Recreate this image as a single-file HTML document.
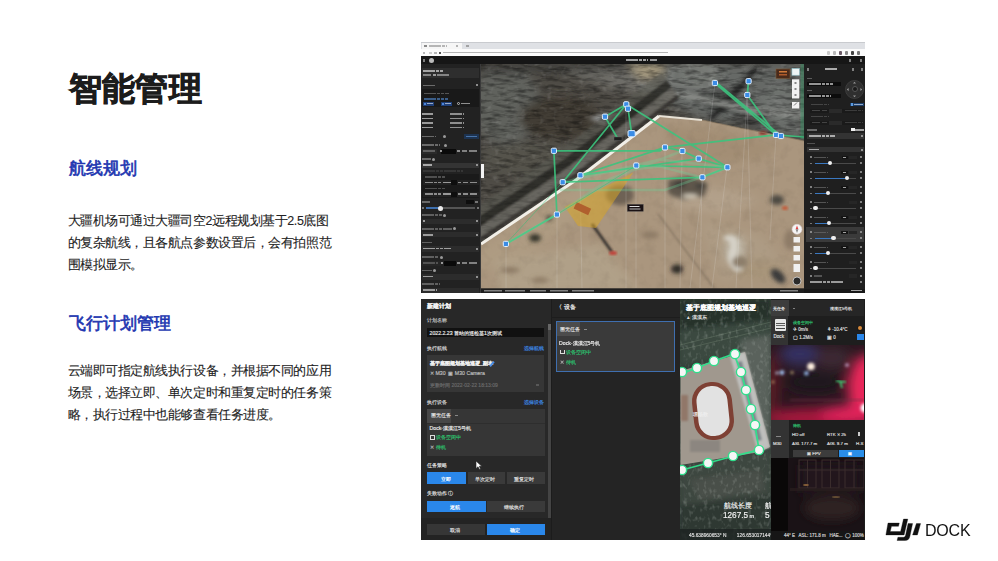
<!DOCTYPE html>
<html><head><meta charset="utf-8">
<style>
*{margin:0;padding:0;box-sizing:border-box}
html,body{width:998px;height:561px;overflow:hidden;background:#fff}
body{position:relative;font-family:"Liberation Sans",sans-serif;color:#222}
.a{position:absolute}
.t{white-space:nowrap}
#title{left:68.8px;top:66.5px;font-size:33px;font-weight:bold;color:#1c1c1c;line-height:44px;-webkit-text-stroke:0.8px #1c1c1c;letter-spacing:0.3px}
.h2{font-size:16.5px;font-weight:normal;color:#2136b0;line-height:22px;-webkit-text-stroke:0.65px #2136b0}
.body{font-size:12.5px;line-height:22px;color:#222;letter-spacing:-0.45px;-webkit-text-stroke:0.1px #222}
#dock{left:925px;top:521.5px;font-size:16px;color:#111;line-height:18px;letter-spacing:-0.2px}
</style></head><body>
<div id="title" class="a t">智能管理</div>
<div class="a t h2" style="left:69px;top:157px">航线规划</div>
<div class="a body t" style="left:67.5px;top:209.5px">大疆机场可通过大疆司空2远程规划基于2.5底图<br>的复杂航线，且各航点参数设置后，会有拍照范<br>围模拟显示。</div>
<div class="a t h2" style="left:69px;top:312px">飞行计划管理</div>
<div class="a body t" style="left:67.5px;top:360px">云端即可指定航线执行设备，并根据不同的应用<br>场景，选择立即、单次定时和重复定时的任务策<br>略，执行过程中也能够查看任务进度。</div>
<div class="a" style="left:0;top:0;width:998px;height:561px;filter:blur(0.3px)">
<div class="a" style="left:421px;top:42px;width:444px;height:7px;background:#dfe1e5;"></div>
<div class="a" style="left:421px;top:42px;width:444px;height:0.8px;background:#c9cbcf;"></div>
<div class="a" style="left:422px;top:43px;width:40px;height:6px;background:#f6f6f6;"></div>
<div class="a" style="left:429px;top:45.05px;width:18px;height:1.5px;background:repeating-linear-gradient(90deg,#9a9a9a 0 3.6px,transparent 3.6px 4.2px);opacity:0.7"></div>
<div class="a" style="left:424px;top:44.8px;width:3px;height:2.2px;background:#8a8a8a;"></div>
<div class="a" style="left:456px;top:45.05px;width:2px;height:1.5px;background:#999;opacity:0.7"></div>
<div class="a" style="left:466px;top:44.8px;width:3px;height:2px;background:#888;opacity:0.7"></div>
<div class="a" style="left:421px;top:49px;width:444px;height:7px;background:#fbfbfb;"></div>
<div class="a" style="left:423px;top:51.5px;width:2px;height:2px;background:#999;opacity:0.7"></div>
<div class="a" style="left:429px;top:51.5px;width:3px;height:2px;background:#bbb;opacity:0.7"></div>
<div class="a" style="left:434px;top:51.5px;width:3px;height:2px;background:#999;opacity:0.7"></div>
<div class="a" style="left:439px;top:51.5px;width:2px;height:2.5px;background:#555;"></div>
<div class="a" style="left:443px;top:51.8px;width:225px;height:1.4px;background:#b4b4b4;"></div>
<div class="a" style="left:827px;top:51px;width:3px;height:3.5px;background:#c8c8c8;border-radius:1px"></div>
<div class="a" style="left:833px;top:51px;width:3px;height:3.5px;background:#b8b8b8;border-radius:1px"></div>
<div class="a" style="left:839px;top:51px;width:3px;height:3.5px;background:#6a5a66;border-radius:1px"></div>
<div class="a" style="left:845px;top:51px;width:3px;height:3.5px;background:#888;border-radius:1px"></div>
<div class="a" style="left:851px;top:51px;width:3px;height:3.5px;background:#444;border-radius:1px"></div>
<div class="a" style="left:857px;top:51px;width:3px;height:3.5px;background:#777;border-radius:1px"></div>
<div class="a" style="left:421px;top:56px;width:444px;height:8px;background:#161616;"></div>
<div class="a" style="left:423px;top:58.5px;width:2px;height:3px;background:#aaa;opacity:0.7"></div>
<div class="a" style="left:429px;top:57.5px;width:5px;height:5px;border-radius:50%;background:#bbb"></div>
<div class="a" style="left:626px;top:58.8px;width:22px;height:2.4px;background:repeating-linear-gradient(90deg,#e0e0e0 0 3.6px,transparent 3.6px 4.2px);opacity:0.7"></div>
<div class="a" style="left:650px;top:58.8px;width:7px;height:2.4px;background:repeating-linear-gradient(90deg,#cfcfcf 0 3.6px,transparent 3.6px 4.2px);opacity:0.7"></div>
<div class="a" style="left:849px;top:58.5px;width:2px;height:3px;background:#aaa;opacity:0.7"></div>
<div class="a" style="left:860px;top:58.5px;width:2px;height:3px;background:#aaa;opacity:0.7"></div>
<div class="a" style="left:421px;top:64px;width:59px;height:229px;background:#222;"></div>
<div class="a" style="left:480px;top:64px;width:1px;height:229px;background:#3a3a3a;"></div>
<div class="a" style="left:421.5px;top:67.7px;width:57.7px;height:10.8px;background:#2e2e2e;"></div>
<div class="a" style="left:423px;top:69.5px;width:20px;height:2px;background:repeating-linear-gradient(90deg,#d8d8d8 0 3.6px,transparent 3.6px 4.2px);opacity:0.7"></div>
<div class="a" style="left:423px;top:74.1px;width:8px;height:1.8px;background:repeating-linear-gradient(90deg,#aaa 0 3.6px,transparent 3.6px 4.2px);opacity:0.7"></div>
<div class="a" style="left:433px;top:74.0px;width:3px;height:2px;background:#ccc;opacity:0.7"></div>
<div class="a" style="left:437px;top:74.1px;width:13px;height:1.8px;background:repeating-linear-gradient(90deg,#aaa 0 3.6px,transparent 3.6px 4.2px);opacity:0.7"></div>
<div class="a" style="left:423px;top:84.5px;width:12px;height:1.8px;background:repeating-linear-gradient(90deg,#8a8a8a 0 3.6px,transparent 3.6px 4.2px);opacity:0.7"></div>
<div class="a" style="left:476px;top:84.4px;width:2px;height:2px;background:#bbb;opacity:0.7"></div>
<div class="a" style="left:421.5px;top:89.3px;width:57.7px;height:17.7px;background:#191919;"></div>
<div class="a" style="left:424px;top:92.7px;width:25px;height:1.6px;background:repeating-linear-gradient(90deg,#6e6e6e 0 3.6px,transparent 3.6px 4.2px);opacity:0.7"></div>
<div class="a" style="left:424px;top:98.0px;width:24px;height:1.6px;background:repeating-linear-gradient(90deg,#4a7bb8 0 3.6px,transparent 3.6px 4.2px);opacity:0.7"></div>
<div class="a" style="left:423px;top:102px;width:11px;height:3.5px;background:#1f3f78;"></div>
<div class="a" style="left:441px;top:102px;width:11px;height:3.5px;background:#1f3f78;"></div>
<div class="a" style="left:424px;top:102.6px;width:2px;height:2.2px;background:#4d86d8;"></div>
<div class="a" style="left:442px;top:102.6px;width:2px;height:2.2px;background:#4d86d8;"></div>
<div class="a" style="left:427px;top:102.95px;width:6px;height:1.5px;background:repeating-linear-gradient(90deg,#cfd8e8 0 3.6px,transparent 3.6px 4.2px);opacity:0.7"></div>
<div class="a" style="left:445px;top:102.95px;width:6px;height:1.5px;background:repeating-linear-gradient(90deg,#cfd8e8 0 3.6px,transparent 3.6px 4.2px);opacity:0.7"></div>
<div class="a" style="left:457px;top:102px;width:3px;height:3px;border:0.6px solid #bbb;border-radius:50%"></div>
<div class="a" style="left:461px;top:102.95px;width:9px;height:1.5px;background:repeating-linear-gradient(90deg,#c0c0c0 0 3.6px,transparent 3.6px 4.2px);opacity:0.7"></div>
<div class="a" style="left:422px;top:113.1px;width:11px;height:1.8px;background:repeating-linear-gradient(90deg,#cfcfcf 0 3.6px,transparent 3.6px 4.2px);opacity:0.7"></div>
<div class="a" style="left:450px;top:113.1px;width:14px;height:1.8px;background:repeating-linear-gradient(90deg,#bdbdbd 0 3.6px,transparent 3.6px 4.2px);opacity:0.7"></div>
<div class="a" style="left:422px;top:117.6px;width:11px;height:1.8px;background:repeating-linear-gradient(90deg,#cfcfcf 0 3.6px,transparent 3.6px 4.2px);opacity:0.7"></div>
<div class="a" style="left:450px;top:117.6px;width:14px;height:1.8px;background:repeating-linear-gradient(90deg,#bdbdbd 0 3.6px,transparent 3.6px 4.2px);opacity:0.7"></div>
<div class="a" style="left:422px;top:122.1px;width:11px;height:1.8px;background:repeating-linear-gradient(90deg,#cfcfcf 0 3.6px,transparent 3.6px 4.2px);opacity:0.7"></div>
<div class="a" style="left:450px;top:122.1px;width:14px;height:1.8px;background:repeating-linear-gradient(90deg,#bdbdbd 0 3.6px,transparent 3.6px 4.2px);opacity:0.7"></div>
<div class="a" style="left:422px;top:126.6px;width:11px;height:1.8px;background:repeating-linear-gradient(90deg,#cfcfcf 0 3.6px,transparent 3.6px 4.2px);opacity:0.7"></div>
<div class="a" style="left:450px;top:126.6px;width:14px;height:1.8px;background:repeating-linear-gradient(90deg,#bdbdbd 0 3.6px,transparent 3.6px 4.2px);opacity:0.7"></div>
<div class="a" style="left:422px;top:135.5px;width:14px;height:1.8px;background:repeating-linear-gradient(90deg,#8a8a8a 0 3.6px,transparent 3.6px 4.2px);opacity:0.7"></div>
<div class="a" style="left:443px;top:135px;width:3px;height:3px;border-radius:50%;background:#999"></div>
<div class="a" style="left:464px;top:133.5px;width:15px;height:5.5px;background:#1d3350;"></div>
<div class="a" style="left:466px;top:135.55px;width:11px;height:1.5px;background:repeating-linear-gradient(90deg,#5b8fd0 0 3.6px,transparent 3.6px 4.2px);opacity:0.7"></div>
<div class="a" style="left:422px;top:144.1px;width:18px;height:1.8px;background:repeating-linear-gradient(90deg,#8a8a8a 0 3.6px,transparent 3.6px 4.2px);opacity:0.7"></div>
<div class="a" style="left:444px;top:143.5px;width:3px;height:3px;border-radius:50%;background:#999"></div>
<div class="a" style="left:421.5px;top:148.5px;width:15.5px;height:5.0px;background:#2a2a2a;"></div>
<div class="a" style="left:423px;top:150.25px;width:12px;height:1.5px;background:repeating-linear-gradient(90deg,#777 0 3.6px,transparent 3.6px 4.2px);opacity:0.7"></div>
<div class="a" style="left:441px;top:148.5px;width:15px;height:5.0px;background:#0a0a0a;"></div>
<div class="a" style="left:440px;top:150.1px;width:2px;height:1.8px;background:#ccc;opacity:0.7"></div>
<div class="a" style="left:457px;top:150.2px;width:3px;height:1.6px;background:#bbb;opacity:0.7"></div>
<div class="a" style="left:462px;top:150.2px;width:5px;height:1.6px;background:#aaa;opacity:0.7"></div>
<div class="a" style="left:469px;top:150.2px;width:8px;height:1.6px;background:repeating-linear-gradient(90deg,#aaa 0 3.6px,transparent 3.6px 4.2px);opacity:0.7"></div>
<div class="a" style="left:422px;top:158.1px;width:9px;height:1.8px;background:repeating-linear-gradient(90deg,#8a8a8a 0 3.6px,transparent 3.6px 4.2px);opacity:0.7"></div>
<div class="a" style="left:432px;top:157.5px;width:3px;height:3px;border-radius:50%;background:#999"></div>
<div class="a" style="left:421.5px;top:162.5px;width:57.7px;height:5.5px;background:#343434;"></div>
<div class="a" style="left:423px;top:164.3px;width:9px;height:1.8px;background:repeating-linear-gradient(90deg,#dcdcdc 0 3.6px,transparent 3.6px 4.2px);opacity:0.7"></div>
<div class="a" style="left:476px;top:164.2px;width:2px;height:2px;background:#bbb;opacity:0.7"></div>
<div class="a" style="left:423px;top:170.25px;width:40px;height:1.5px;background:repeating-linear-gradient(90deg,#3e3e3e 0 3.6px,transparent 3.6px 4.2px);opacity:0.7"></div>
<div class="a" style="left:421.5px;top:173.5px;width:57.7px;height:24.5px;background:#1a1a1a;"></div>
<div class="a" style="left:425px;top:176.25px;width:20px;height:1.5px;background:repeating-linear-gradient(90deg,#666 0 3.6px,transparent 3.6px 4.2px);opacity:0.7"></div>
<div class="a" style="left:423px;top:180px;width:56px;height:5px;background:#222;"></div>
<div class="a" style="left:425px;top:181.75px;width:8px;height:1.5px;background:repeating-linear-gradient(90deg,#bbb 0 3.6px,transparent 3.6px 4.2px);opacity:0.7"></div>
<div class="a" style="left:434px;top:181.75px;width:3px;height:1.5px;background:#bbb;opacity:0.7"></div>
<div class="a" style="left:438px;top:181.75px;width:3px;height:1.5px;background:#bbb;opacity:0.7"></div>
<div class="a" style="left:443px;top:181.75px;width:8px;height:1.5px;background:repeating-linear-gradient(90deg,#ccc 0 3.6px,transparent 3.6px 4.2px);opacity:0.7"></div>
<div class="a" style="left:451px;top:180px;width:6px;height:5px;background:#0e0e0e;"></div>
<div class="a" style="left:458px;top:181.75px;width:3px;height:1.5px;background:#bbb;opacity:0.7"></div>
<div class="a" style="left:463px;top:181.75px;width:5px;height:1.5px;background:#bbb;opacity:0.7"></div>
<div class="a" style="left:470px;top:181.75px;width:7px;height:1.5px;background:repeating-linear-gradient(90deg,#bbb 0 3.6px,transparent 3.6px 4.2px);opacity:0.7"></div>
<div class="a" style="left:425px;top:187.75px;width:20px;height:1.5px;background:repeating-linear-gradient(90deg,#666 0 3.6px,transparent 3.6px 4.2px);opacity:0.7"></div>
<div class="a" style="left:423px;top:191.5px;width:56px;height:5.0px;background:#222;"></div>
<div class="a" style="left:425px;top:193.25px;width:8px;height:1.5px;background:repeating-linear-gradient(90deg,#bbb 0 3.6px,transparent 3.6px 4.2px);opacity:0.7"></div>
<div class="a" style="left:434px;top:193.25px;width:3px;height:1.5px;background:#bbb;opacity:0.7"></div>
<div class="a" style="left:438px;top:193.25px;width:3px;height:1.5px;background:#bbb;opacity:0.7"></div>
<div class="a" style="left:443px;top:193.25px;width:8px;height:1.5px;background:repeating-linear-gradient(90deg,#ccc 0 3.6px,transparent 3.6px 4.2px);opacity:0.7"></div>
<div class="a" style="left:451px;top:191.5px;width:6px;height:5.0px;background:#0e0e0e;"></div>
<div class="a" style="left:458px;top:193.25px;width:3px;height:1.5px;background:#bbb;opacity:0.7"></div>
<div class="a" style="left:463px;top:193.25px;width:5px;height:1.5px;background:#bbb;opacity:0.7"></div>
<div class="a" style="left:470px;top:193.25px;width:7px;height:1.5px;background:repeating-linear-gradient(90deg,#bbb 0 3.6px,transparent 3.6px 4.2px);opacity:0.7"></div>
<div class="a" style="left:422px;top:201.0px;width:8px;height:1.6px;background:repeating-linear-gradient(90deg,#888 0 3.6px,transparent 3.6px 4.2px);opacity:0.7"></div>
<div class="a" style="left:466px;top:200px;width:8px;height:3.5px;background:#0e0e0e;"></div>
<div class="a" style="left:474.5px;top:201.05px;width:3px;height:1.5px;background:#999;opacity:0.7"></div>
<div class="a" style="left:422px;top:207.25px;width:2px;height:1.5px;background:#999;opacity:0.7"></div>
<div class="a" style="left:426px;top:207.3px;width:14px;height:1.4px;background:#3e6fae;"></div>
<div class="a" style="left:440px;top:207.4px;width:35px;height:1.2px;background:#555;"></div>
<div class="a" style="left:437.5px;top:205.5px;width:5px;height:5px;border-radius:50%;background:#eaeaea"></div>
<div class="a" style="left:477px;top:207.25px;width:2px;height:1.5px;background:#999;opacity:0.7"></div>
<div class="a" style="left:422px;top:214.2px;width:20px;height:1.6px;background:repeating-linear-gradient(90deg,#7a7a7a 0 3.6px,transparent 3.6px 4.2px);opacity:0.7"></div>
<div class="a" style="left:443px;top:213.5px;width:3px;height:3px;border-radius:50%;background:#999"></div>
<div class="a" style="left:421.5px;top:218.5px;width:57.7px;height:5.0px;background:#2c2c2c;"></div>
<div class="a" style="left:423px;top:220.2px;width:2px;height:1.6px;background:#ccc;opacity:0.7"></div>
<div class="a" style="left:476px;top:220.0px;width:2px;height:2px;background:#bbb;opacity:0.7"></div>
<div class="a" style="left:422px;top:228.0px;width:30px;height:1.6px;background:repeating-linear-gradient(90deg,#7a7a7a 0 3.6px,transparent 3.6px 4.2px);opacity:0.7"></div>
<div class="a" style="left:453px;top:227.3px;width:3px;height:3px;border-radius:50%;background:#999"></div>
<div class="a" style="left:421.5px;top:232.3px;width:57.7px;height:5.2px;background:#2c2c2c;"></div>
<div class="a" style="left:423px;top:234.2px;width:10px;height:1.6px;background:repeating-linear-gradient(90deg,#ccc 0 3.6px,transparent 3.6px 4.2px);opacity:0.7"></div>
<div class="a" style="left:476px;top:234.0px;width:2px;height:2px;background:#bbb;opacity:0.7"></div>
<div class="a" style="left:422px;top:241.5px;width:10px;height:1.6px;background:repeating-linear-gradient(90deg,#7a7a7a 0 3.6px,transparent 3.6px 4.2px);opacity:0.7"></div>
<div class="a" style="left:421.5px;top:246px;width:57.7px;height:5.5px;background:#2c2c2c;"></div>
<div class="a" style="left:423px;top:247.9px;width:28px;height:1.6px;background:repeating-linear-gradient(90deg,#d0d0d0 0 3.6px,transparent 3.6px 4.2px);opacity:0.7"></div>
<div class="a" style="left:476px;top:247.7px;width:2px;height:2px;background:#bbb;opacity:0.7"></div>
<div class="a" style="left:422px;top:256.2px;width:17px;height:1.6px;background:repeating-linear-gradient(90deg,#7a7a7a 0 3.6px,transparent 3.6px 4.2px);opacity:0.7"></div>
<div class="a" style="left:440px;top:255.5px;width:3px;height:3px;border-radius:50%;background:#999"></div>
<div class="a" style="left:421.5px;top:260.5px;width:19.5px;height:5.0px;background:#262626;"></div>
<div class="a" style="left:423px;top:262.25px;width:15px;height:1.5px;background:repeating-linear-gradient(90deg,#666 0 3.6px,transparent 3.6px 4.2px);opacity:0.7"></div>
<div class="a" style="left:441px;top:262.2px;width:2px;height:1.6px;background:#ccc;opacity:0.7"></div>
<div class="a" style="left:444px;top:260.5px;width:12px;height:5.0px;background:#0a0a0a;"></div>
<div class="a" style="left:457px;top:262.25px;width:3px;height:1.5px;background:#bbb;opacity:0.7"></div>
<div class="a" style="left:462px;top:262.25px;width:5px;height:1.5px;background:#aaa;opacity:0.7"></div>
<div class="a" style="left:469px;top:262.25px;width:8px;height:1.5px;background:repeating-linear-gradient(90deg,#aaa 0 3.6px,transparent 3.6px 4.2px);opacity:0.7"></div>
<div class="a" style="left:422px;top:269.8px;width:10px;height:1.6px;background:repeating-linear-gradient(90deg,#7a7a7a 0 3.6px,transparent 3.6px 4.2px);opacity:0.7"></div>
<div class="a" style="left:433px;top:269px;width:3px;height:3px;border-radius:50%;background:#999"></div>
<div class="a" style="left:421.5px;top:274px;width:57.7px;height:5.5px;background:#2c2c2c;"></div>
<div class="a" style="left:423px;top:275.9px;width:10px;height:1.6px;background:repeating-linear-gradient(90deg,#ccc 0 3.6px,transparent 3.6px 4.2px);opacity:0.7"></div>
<div class="a" style="left:476px;top:275.7px;width:2px;height:2px;background:#bbb;opacity:0.7"></div>
<div class="a" style="left:422px;top:283.2px;width:18px;height:1.6px;background:repeating-linear-gradient(90deg,#7a7a7a 0 3.6px,transparent 3.6px 4.2px);opacity:0.7"></div>
<div class="a" style="left:421.5px;top:287.5px;width:57.7px;height:5.5px;background:#2c2c2c;"></div>
<div class="a" style="left:423px;top:289.2px;width:14px;height:1.6px;background:repeating-linear-gradient(90deg,#ccc 0 3.6px,transparent 3.6px 4.2px);opacity:0.7"></div>
<svg class="a" style="left:481px;top:64px" width="323" height="229" viewBox="481 64 323 229">
<defs>
<filter id="bl"><feGaussianBlur stdDeviation="4"/></filter>
<filter id="bl2"><feGaussianBlur stdDeviation="2"/></filter>
<filter id="bl1"><feGaussianBlur stdDeviation="0.9"/></filter>
<filter id="tx" x="0" y="0" width="100%" height="100%"><feTurbulence type="fractalNoise" baseFrequency="0.07 0.28" numOctaves="3" seed="3"/><feColorMatrix values="0 0 0 0 0  0 0 0 0 0  0 0 0 0 0  0 0 0 -2.2 1.25"/></filter>
<filter id="tx2" x="0" y="0" width="100%" height="100%"><feTurbulence type="fractalNoise" baseFrequency="0.15 0.15" numOctaves="2" seed="7"/><feColorMatrix values="0 0 0 0 1  0 0 0 0 1  0 0 0 0 1  0 0 0 2.5 -1.45"/></filter>
<filter id="tx3" x="0" y="0" width="100%" height="100%"><feTurbulence type="fractalNoise" baseFrequency="0.09" numOctaves="3" seed="11"/><feColorMatrix values="0 0 0 0 0.2  0 0 0 0 0.15  0 0 0 0 0.1  0 0 0 -2.5 1.3"/></filter>
<clipPath id="rockc"><path d="M481 64 L804 64 L804 141 L776 135 L740 128 L702 120 L659 116 L576 180 L481 244Z"/></clipPath>
<clipPath id="sandc"><path d="M481 244 L576 180 L659 116 L702 120 L740 128 L776 135 L804 141 L804 293 L481 293Z"/></clipPath>
</defs>
<rect x="481" y="64" width="323" height="229" fill="#4f4c46"/>
<g filter="url(#bl)">
<ellipse cx="505" cy="105" rx="35" ry="40" fill="#60625d"/>
<ellipse cx="560" cy="118" rx="40" ry="22" fill="#433d36"/>
<ellipse cx="530" cy="160" rx="50" ry="18" fill="#55524c"/>
<path d="M481 64 L700 64 L690 80 L600 78 L540 72 L481 74Z" fill="#3e3d3a"/>
<path d="M560 72 L660 70 L680 95 L620 92Z" fill="#6e6d68"/>
<path d="M628 64 L662 64 L664 74 L642 80Z" fill="#a89c80"/>
<path d="M665 64 L804 64 L804 140 L700 118 L660 100Z" fill="#666966"/>
<ellipse cx="720" cy="100" rx="18" ry="10" fill="#3d3f3c"/>
<ellipse cx="700" cy="75" rx="25" ry="8" fill="#777a76"/>
<ellipse cx="780" cy="105" rx="20" ry="18" fill="#707370"/>
<ellipse cx="750" cy="120" rx="20" ry="8" fill="#484a47"/>
</g>
<g filter="url(#bl2)">
<path d="M588 118 L612 112 L605 124 Z" fill="#9a9c9c"/>
<path d="M708 118 Q730 95 755 66 L760 68 Q736 98 712 121Z" fill="#2a2c2a"/>
<path d="M640 84 Q690 92 752 108 L804 112 L804 117 L752 114 Q690 98 640 91Z" fill="#8a8c88"/>
<rect x="672" y="66" width="40" height="20" fill="none" stroke="#8e918c" stroke-width="2" transform="rotate(8 692 76)"/>
</g>
<path d="M481 244 L576 180 L659 116 L702 120 L740 128 L776 135 L804 141 L804 293 L481 293Z" fill="#aa967e"/>
<g filter="url(#bl)">
<path d="M481 250 L576 186 L640 140 L600 200 L520 260 L481 270Z" fill="#ae9b82"/>
<path d="M665 125 L720 130 L780 145 L760 160 L700 165 L670 150Z" fill="#a38e74"/>
<path d="M660 180 L730 190 L760 200 L720 215 L670 205Z" fill="#b2a08a"/>
<path d="M700 220 L760 235 L790 270 L720 282Z" fill="#ad9b84"/>
<path d="M495 260 L600 245 L640 290 L500 293Z" fill="#b0a088"/>
<ellipse cx="735" cy="250" rx="10" ry="14" fill="#beb6a6"/>
<ellipse cx="760" cy="270" rx="25" ry="10" fill="#a8957a"/>
</g>
<g clip-path="url(#rockc)"><rect x="481" y="64" width="323" height="229" filter="url(#tx)" opacity="0.3"/><rect x="481" y="64" width="323" height="229" filter="url(#tx2)" opacity="0.15"/></g>
<g clip-path="url(#sandc)"><rect x="481" y="64" width="323" height="229" filter="url(#tx3)" opacity="0.18"/></g>
<g filter="url(#bl1)" clip-path="url(#rockc)">
<polygon points="458.9,256.3 574.9,178.3 657.9,114.3 678.9,98.3 676.6,95.0 655.6,111.0 572.6,175.0 456.6,253.0" fill="#3a3834" opacity="1"/>
<polygon points="456.6,253.0 572.6,175.0 655.6,111.0 676.6,95.0 671.6,87.5 650.6,103.5 567.6,167.6 451.6,245.6" fill="#6a6862" opacity="0.9"/>
<polygon points="451.6,245.6 567.6,167.6 650.6,103.5 671.6,87.5 666.6,80.1 645.6,96.1 562.6,160.1 446.6,238.1" fill="#2e2c28" opacity="0.9"/>
<polygon points="446.6,238.1 562.6,160.1 645.6,96.1 666.6,80.1 661.5,72.6 640.5,88.6 557.5,152.6 441.5,230.6" fill="#5a5852" opacity="0.7"/>
</g>
<g clip-path="url(#rockc)"><rect x="481" y="64" width="323" height="229" filter="url(#tx)" opacity="0.2"/></g>
<g filter="url(#bl2)">
<ellipse cx="535" cy="238" rx="6" ry="4" fill="#35352c"/>
<ellipse cx="549" cy="218" rx="3" ry="2.5" fill="#3c3c30"/>
<ellipse cx="677" cy="269" rx="6" ry="4.5" fill="#2f2c28"/>
<path d="M668 180 L690 176 L708 184 L704 196 L684 200 L668 194Z" fill="#5e574c"/>
<ellipse cx="680" cy="184" rx="6" ry="3" fill="#3a3834"/>
<ellipse cx="700" cy="186" rx="5" ry="3" fill="#45423c"/>
<ellipse cx="690" cy="196" rx="8" ry="2" fill="#d4ccbc"/>
<ellipse cx="778" cy="276" rx="5" ry="9" transform="rotate(-45 778 276)" fill="#3a3a3a"/>
<ellipse cx="777" cy="200" rx="7" ry="5" fill="#4e4a42"/>
<path d="M724 236 Q740 232 738 248 Q734 262 744 270 L736 272 Q724 262 730 248 Q732 240 724 240Z" fill="#d6d2c8"/>
<ellipse cx="740" cy="262" rx="8" ry="6" fill="#8c7e6a"/>
<ellipse cx="620" cy="195" rx="14" ry="10" fill="#6e6254"/>
<ellipse cx="510" cy="270" rx="10" ry="3" fill="#8e7c66"/>
<ellipse cx="540" cy="280" rx="8" ry="3" fill="#907e68"/>
<ellipse cx="650" cy="235" rx="9" ry="4" fill="#8f7d67"/>
<ellipse cx="790" cy="240" rx="6" ry="10" fill="#8e7c68"/>
</g>
<path d="M592 224 L612 252" stroke="#3a3530" stroke-width="3" filter="url(#bl1)"/>
<path d="M658 214 L714 288" stroke="#7d6d5c" stroke-width="1.2" filter="url(#bl1)"/>
<ellipse cx="613" cy="253" rx="4" ry="2" fill="#c0443a" filter="url(#bl1)"/>
<ellipse cx="785" cy="208" rx="3" ry="2" fill="#c06040" filter="url(#bl1)"/>
<ellipse cx="763" cy="133" rx="4" ry="2" fill="#8a3a30" filter="url(#bl1)"/>
<path d="M481 244 L576 180 L659 116" stroke="#f2efe8" stroke-width="3" fill="none"/>
<path d="M659 116 L702 120" stroke="#e8e2d6" stroke-width="2" fill="none"/>
<path d="M702 120 L740 128 L776 135 L804 141" stroke="#8f7c64" stroke-width="1.2" fill="none" opacity="0.7"/>
<g stroke="#e8e8e8" stroke-width="0.5" opacity="0.35">
<line x1="557" y1="215" x2="557" y2="288"/><line x1="626" y1="104" x2="626" y2="288"/><line x1="665" y1="147" x2="665" y2="288"/>
<line x1="702" y1="177" x2="700" y2="288"/><line x1="727" y1="167" x2="712" y2="288"/><line x1="748" y1="81" x2="736" y2="288"/>
<line x1="776" y1="135" x2="770" y2="240"/><line x1="636" y1="166" x2="636" y2="288"/><line x1="580" y1="175" x2="582" y2="288"/>
<line x1="506" y1="246" x2="506" y2="288"/><line x1="747" y1="95" x2="752" y2="288"/><line x1="715" y1="83" x2="690" y2="288"/>
<line x1="682" y1="151" x2="680" y2="288"/>
</g>
<path d="M633.3 172.4 L564.7 206.7 L578 226 L596 228Z" fill="#dba624" opacity="0.52"/>
<rect x="574.4" y="205.1" width="16" height="7" fill="#b0602e" transform="rotate(25 582.4 208.6)"/>
<g stroke="#3cc47e" stroke-width="1.7" fill="none" opacity="0.9">
<polyline points="553.9,150.8 660,150.8 665,147.4 776,134.9"/>
<polyline points="553.9,150.8 556.9,214.5 505.9,243.9"/>
<polyline points="562.7,182.2 626.3,104.3 605,116.7 618,139"/>
<polyline points="628,108.7 631.6,133.7"/>
<polyline points="626.3,104.3 727.4,167.3"/>
<polyline points="776,134.9 804,137"/>
<polyline points="714.9,83 776,134.9"/><polyline points="718,84 781,136"/>
<polyline points="747.3,95 776,134.9"/><polyline points="748.6,81.2 747.3,95"/>
<polyline points="665,147.4 682.4,151 698.7,158.6 727.4,167.3 702.4,177.3"/>
<polyline points="580.4,175.3 698.7,158.6"/>
<polyline points="562.7,182.2 702.4,177.3"/>
<polyline points="636.3,165.5 727.4,167.3"/>
<polyline points="580.4,175.3 665,147.4"/>
</g>
<g opacity="0.3" stroke="#6ad89c" stroke-width="2.6" fill="none">
<polyline points="562.7,182.2 660,159.6 727,167"/>
<polyline points="580.4,175.3 660,166.5 700,177"/>
<polyline points="556.9,214.5 610,179 682,151"/>
<polyline points="505.9,243.9 556.9,214.5 636,165.5"/>
<polyline points="560,190 665,190 727,168"/>
</g>
<g opacity="0.5" stroke="#32c078" stroke-width="1" fill="none">
<polyline points="505.9,243.9 562.7,182.2"/>
<polyline points="556.9,214.5 636.3,165.5"/>
</g>
<g fill="#3a8ce6" stroke="#e4f1ff" stroke-width="1">
<rect x="503.3" y="241.3" width="5.2" height="5.2" rx="1.2"/><rect x="554.3" y="211.9" width="5.2" height="5.2" rx="1.2"/><rect x="551.3" y="148.2" width="5.2" height="5.2" rx="1.2"/>
<rect x="623.7" y="101.7" width="5.2" height="5.2" rx="1.2"/><rect x="625.4" y="106.1" width="5.2" height="5.2" rx="1.2"/><rect x="602.4" y="114.1" width="5.2" height="5.2" rx="1.2"/>
<rect x="628.0" y="130.6" width="7.2" height="6.2" rx="1.2"/><rect x="577.8" y="172.7" width="5.2" height="5.2" rx="1.2"/><rect x="560.1" y="179.6" width="5.2" height="5.2" rx="1.2"/>
<rect x="633.7" y="162.9" width="5.2" height="5.2" rx="1.2"/><rect x="712.3" y="80.4" width="5.2" height="5.2" rx="1.2"/><rect x="746.0" y="78.6" width="5.2" height="5.2" rx="1.2"/>
<rect x="744.7" y="92.4" width="5.2" height="5.2" rx="1.2"/><rect x="773.4" y="132.3" width="5.2" height="5.2" rx="1.2"/><rect x="778.4" y="133.4" width="5.2" height="5.2" rx="1.2"/>
<rect x="662.4" y="144.8" width="5.2" height="5.2" rx="1.2"/><rect x="679.8" y="148.4" width="5.2" height="5.2" rx="1.2"/><rect x="696.1" y="156.0" width="5.2" height="5.2" rx="1.2"/>
<rect x="724.8" y="164.7" width="5.2" height="5.2" rx="1.2"/><rect x="699.8" y="174.7" width="5.2" height="5.2" rx="1.2"/>
</g>
<rect x="614" y="137" width="8" height="3.5" fill="#1e1e1e" stroke="#666" stroke-width="0.4"/>
<rect x="627.3" y="204.3" width="16" height="7" fill="#1a1214" stroke="#555" stroke-width="0.4"/><rect x="629.5" y="206" width="10" height="1" fill="#ddd"/><rect x="629.5" y="208.5" width="11" height="1" fill="#bbb"/>
<rect x="776" y="69" width="14" height="9.5" fill="#4a2a1a" stroke="#7a5a3a" stroke-width="0.6"/><rect x="779" y="71" width="8" height="1.5" fill="#d07a3a"/><rect x="779" y="74" width="8" height="1.5" fill="#b05a2a"/>
<rect x="792" y="68.6" width="7.3" height="6.6" fill="#eef4f4" stroke="#9ccfd8" stroke-width="0.6"/>
<rect x="792" y="79.3" width="7.3" height="19.2" fill="#f2f2f2"/>
<rect x="792" y="102" width="7.3" height="6.5" fill="#f2f2f2"/>
<path d="M794 105.5 L797 102.5" stroke="#555" stroke-width="0.8"/>
<rect x="794.5" y="82" width="2" height="2" fill="#888"/><rect x="794.5" y="88" width="2" height="2" fill="#888"/><rect x="794.5" y="94" width="2" height="2" fill="#888"/>
<rect x="800.5" y="64" width="3.5" height="75" fill="#3a9a6a" opacity="0.45"/>
<circle cx="797" cy="229.3" r="5" fill="#f5f5f5" stroke="#d8c8c8" stroke-width="0.6"/>
<path d="M797 225.5 L795.6 229.3 L798.4 229.3Z" fill="#d44"/><path d="M797 233 L795.6 229.3 L798.4 229.3Z" fill="#888"/>
<rect x="793.5" y="237" width="6.5" height="5.5" fill="#f0f0f0"/>
<rect x="793.5" y="246" width="6.5" height="5.5" fill="#f0f0f0"/>
<rect x="793.5" y="255" width="6.5" height="5.5" fill="#f0f0f0"/>
<rect x="793.5" y="264" width="6.5" height="8" fill="#f0f0f0"/>
<circle cx="797" cy="281" r="4" fill="#2a2a2a" stroke="#ddd" stroke-width="0.8"/>
<rect x="481" y="164" width="3" height="14" fill="#f4f4f4"/>
<rect x="481" y="288.3" width="323" height="4.7" fill="#1e1e1e"/>
<rect x="484" y="290.2" width="18" height="1.2" fill="#999"/><rect x="505" y="290.2" width="20" height="1.2" fill="#999"/><rect x="530" y="290.2" width="16" height="1.2" fill="#999"/><rect x="550" y="290.2" width="18" height="1.2" fill="#999"/><rect x="572" y="290.2" width="22" height="1.2" fill="#999"/>
<rect x="780" y="290.2" width="18" height="1.2" fill="#999"/>
</svg>
<div class="a" style="left:804px;top:64px;width:61px;height:229px;background:#1f1f1f;"></div>
<div class="a" style="left:807px;top:68.05px;width:2px;height:2.5px;background:#aaa;opacity:0.7"></div>
<div class="a" style="left:825px;top:68.2px;width:12px;height:2.2px;background:repeating-linear-gradient(90deg,#e8e8e8 0 3.6px,transparent 3.6px 4.2px);opacity:0.7"></div>
<div class="a" style="left:852px;top:68.05px;width:2px;height:2.5px;background:#aaa;opacity:0.7"></div>
<div class="a" style="left:861px;top:68.05px;width:2px;height:2.5px;background:#aaa;opacity:0.7"></div>
<div class="a" style="left:807px;top:77.7px;width:5px;height:1.6px;background:#777;opacity:0.7"></div>
<div class="a" style="left:807px;top:82px;width:33.6px;height:4.4px;background:#0c0c0c;"></div>
<div class="a" style="left:808.5px;top:83.45px;width:24px;height:1.5px;background:repeating-linear-gradient(90deg,#d0d0d0 0 3.6px,transparent 3.6px 4.2px);opacity:0.7"></div>
<div class="a" style="left:807px;top:89.7px;width:5px;height:1.6px;background:#777;opacity:0.7"></div>
<div class="a" style="left:807px;top:94px;width:33.6px;height:4.2px;background:#0c0c0c;"></div>
<div class="a" style="left:808.5px;top:95.35px;width:22px;height:1.5px;background:repeating-linear-gradient(90deg,#d0d0d0 0 3.6px,transparent 3.6px 4.2px);opacity:0.7"></div>
<div class="a" style="left:845px;top:80px;width:19px;height:19px;border-radius:50%;background:#2f2f2f;border:1px solid #3c3c3c"></div>
<div class="a" style="left:851.5px;top:86px;width:6px;height:6px;border-radius:50%;background:#1a1a1a;border:0.8px solid #555"></div>
<svg class="a" style="left:845px;top:80px" width="19" height="19" viewBox="0 0 19 19"><g fill="#9a9a9a"><path d="M9.5 1.8 L8 3.6 L11 3.6Z"/><path d="M9.5 17.2 L8 15.4 L11 15.4Z"/><path d="M1.8 9.5 L3.6 8 L3.6 11Z"/><path d="M17.2 9.5 L15.4 8 L15.4 11Z"/></g></svg>
<div class="a" style="left:850px;top:102.8px;width:14px;height:3.6px;background:#1d3f6c;"></div>
<div class="a" style="left:851px;top:103.4px;width:2px;height:2.4px;background:#5a9ae0;"></div>
<div class="a" style="left:854px;top:103.9px;width:9px;height:1.4px;background:repeating-linear-gradient(90deg,#c8d8ee 0 3.6px,transparent 3.6px 4.2px);opacity:0.7"></div>
<div class="a" style="left:811px;top:103.85px;width:18px;height:1.5px;background:repeating-linear-gradient(90deg,#555 0 3.6px,transparent 3.6px 4.2px);opacity:0.7"></div>
<div class="a" style="left:810px;top:108.5px;width:54px;height:4.5px;background:#1a1a1a;"></div>
<div class="a" style="left:812px;top:110.0px;width:8px;height:1.4px;background:repeating-linear-gradient(90deg,#555 0 3.6px,transparent 3.6px 4.2px);opacity:0.7"></div>
<div class="a" style="left:822px;top:110.0px;width:5px;height:1.4px;background:#555;opacity:0.7"></div>
<div class="a" style="left:829px;top:108.7px;width:13px;height:4.0px;background:#2a2a2a;"></div>
<div class="a" style="left:845px;top:110.0px;width:18px;height:1.4px;background:repeating-linear-gradient(90deg,#4a4a4a 0 3.6px,transparent 3.6px 4.2px);opacity:0.7"></div>
<div class="a" style="left:811px;top:115.75px;width:18px;height:1.5px;background:repeating-linear-gradient(90deg,#555 0 3.6px,transparent 3.6px 4.2px);opacity:0.7"></div>
<div class="a" style="left:810px;top:120.5px;width:54px;height:4.5px;background:#1a1a1a;"></div>
<div class="a" style="left:812px;top:122.0px;width:8px;height:1.4px;background:repeating-linear-gradient(90deg,#555 0 3.6px,transparent 3.6px 4.2px);opacity:0.7"></div>
<div class="a" style="left:822px;top:122.0px;width:5px;height:1.4px;background:#555;opacity:0.7"></div>
<div class="a" style="left:829px;top:120.7px;width:13px;height:4.0px;background:#2a2a2a;"></div>
<div class="a" style="left:845px;top:122.0px;width:18px;height:1.4px;background:repeating-linear-gradient(90deg,#4a4a4a 0 3.6px,transparent 3.6px 4.2px);opacity:0.7"></div>
<div class="a" style="left:807px;top:129.05px;width:10px;height:1.5px;background:repeating-linear-gradient(90deg,#888 0 3.6px,transparent 3.6px 4.2px);opacity:0.7"></div>
<div class="a" style="left:851px;top:128.2px;width:3.5px;height:3.2px;background:#eee;"></div>
<div class="a" style="left:855px;top:129.05px;width:9px;height:1.5px;background:repeating-linear-gradient(90deg,#ddd 0 3.6px,transparent 3.6px 4.2px);opacity:0.7"></div>
<div class="a" style="left:807px;top:132.9px;width:57px;height:6.4px;background:#333;"></div>
<div class="a" style="left:809px;top:135.2px;width:26px;height:1.8px;background:repeating-linear-gradient(90deg,#e0e0e0 0 3.6px,transparent 3.6px 4.2px);opacity:0.7"></div>
<div class="a" style="left:861px;top:135.1px;width:1.5px;height:2px;background:#bbb;opacity:0.7"></div>
<div class="a" style="left:807px;top:142.6px;width:8px;height:1.4px;background:repeating-linear-gradient(90deg,#666 0 3.6px,transparent 3.6px 4.2px);opacity:0.7"></div>
<div class="a" style="left:807px;top:146.8px;width:57px;height:5.7px;background:#333;"></div>
<div class="a" style="left:809px;top:148.7px;width:10px;height:1.8px;background:repeating-linear-gradient(90deg,#ddd 0 3.6px,transparent 3.6px 4.2px);opacity:0.7"></div>
<div class="a" style="left:861px;top:148.6px;width:1.5px;height:2px;background:#bbb;opacity:0.7"></div>
<div class="a" style="left:810px;top:156.2px;width:2.2px;height:2.2px;background:#aaa;opacity:0.7"></div>
<div class="a" style="left:814px;top:156.55px;width:14px;height:1.5px;background:repeating-linear-gradient(90deg,#6a6a6a 0 3.6px,transparent 3.6px 4.2px);opacity:0.7"></div>
<div class="a" style="left:842px;top:155.60000000000002px;width:6px;height:3.4px;background:#141414;"></div>
<div class="a" style="left:843px;top:156.55px;width:3px;height:1.5px;background:#ddd;opacity:0.7"></div>
<div class="a" style="left:849px;top:155.60000000000002px;width:8px;height:3.4px;background:#262626;"></div>
<div class="a" style="left:860px;top:156.2px;width:2px;height:2.2px;background:#aaa;opacity:0.7"></div>
<div class="a" style="left:810px;top:162.5px;width:2px;height:1.6px;background:#999;opacity:0.7"></div>
<div class="a" style="left:815px;top:162.70000000000002px;width:14.9px;height:1.2px;background:#3a78c0;"></div>
<div class="a" style="left:829.9px;top:162.8px;width:26.1px;height:1.0px;background:#4a4a4a;"></div>
<div class="a" style="left:827.6999999999999px;top:161.10000000000002px;width:4.4px;height:4.4px;border-radius:50%;background:#f0f0f0"></div>
<div class="a" style="left:860px;top:162.2px;width:2px;height:2.2px;background:#aaa;opacity:0.7"></div>
<div class="a" style="left:810px;top:171.2px;width:2.2px;height:2.2px;background:#aaa;opacity:0.7"></div>
<div class="a" style="left:814px;top:171.55px;width:14px;height:1.5px;background:repeating-linear-gradient(90deg,#6a6a6a 0 3.6px,transparent 3.6px 4.2px);opacity:0.7"></div>
<div class="a" style="left:841px;top:170.60000000000002px;width:7px;height:3.4px;background:#141414;"></div>
<div class="a" style="left:843px;top:171.55px;width:3px;height:1.5px;background:#ddd;opacity:0.7"></div>
<div class="a" style="left:849px;top:170.60000000000002px;width:8px;height:3.4px;background:#262626;"></div>
<div class="a" style="left:860px;top:171.2px;width:2px;height:2.2px;background:#aaa;opacity:0.7"></div>
<div class="a" style="left:810px;top:177.5px;width:2px;height:1.6px;background:#999;opacity:0.7"></div>
<div class="a" style="left:815px;top:177.70000000000002px;width:32.3px;height:1.2px;background:#3a78c0;"></div>
<div class="a" style="left:847.3px;top:177.8px;width:8.7px;height:1.0px;background:#4a4a4a;"></div>
<div class="a" style="left:845.0999999999999px;top:176.10000000000002px;width:4.4px;height:4.4px;border-radius:50%;background:#f0f0f0"></div>
<div class="a" style="left:860px;top:177.2px;width:2px;height:2.2px;background:#aaa;opacity:0.7"></div>
<div class="a" style="left:810px;top:186.2px;width:2.2px;height:2.2px;background:#aaa;opacity:0.7"></div>
<div class="a" style="left:814px;top:186.55px;width:14px;height:1.5px;background:repeating-linear-gradient(90deg,#6a6a6a 0 3.6px,transparent 3.6px 4.2px);opacity:0.7"></div>
<div class="a" style="left:841px;top:185.60000000000002px;width:7px;height:3.4px;background:#141414;"></div>
<div class="a" style="left:843px;top:186.55px;width:3px;height:1.5px;background:#ddd;opacity:0.7"></div>
<div class="a" style="left:849px;top:185.60000000000002px;width:8px;height:3.4px;background:#262626;"></div>
<div class="a" style="left:860px;top:186.2px;width:2px;height:2.2px;background:#aaa;opacity:0.7"></div>
<div class="a" style="left:810px;top:192.5px;width:2px;height:1.6px;background:#999;opacity:0.7"></div>
<div class="a" style="left:815px;top:192.70000000000002px;width:13px;height:1.2px;background:#3a78c0;"></div>
<div class="a" style="left:828px;top:192.8px;width:28px;height:1.0px;background:#4a4a4a;"></div>
<div class="a" style="left:825.8px;top:191.10000000000002px;width:4.4px;height:4.4px;border-radius:50%;background:#f0f0f0"></div>
<div class="a" style="left:860px;top:192.2px;width:2px;height:2.2px;background:#aaa;opacity:0.7"></div>
<div class="a" style="left:810px;top:201.2px;width:2.2px;height:2.2px;background:#aaa;opacity:0.7"></div>
<div class="a" style="left:814px;top:201.55px;width:14px;height:1.5px;background:repeating-linear-gradient(90deg,#6a6a6a 0 3.6px,transparent 3.6px 4.2px);opacity:0.7"></div>
<div class="a" style="left:849px;top:200.60000000000002px;width:8px;height:3.4px;background:#262626;"></div>
<div class="a" style="left:860px;top:201.2px;width:2px;height:2.2px;background:#aaa;opacity:0.7"></div>
<div class="a" style="left:810px;top:207.5px;width:2px;height:1.6px;background:#999;opacity:0.7"></div>
<div class="a" style="left:815px;top:207.70000000000002px;width:0.4px;height:1.2px;background:#3a78c0;"></div>
<div class="a" style="left:815.4px;top:207.8px;width:40.6px;height:1.0px;background:#4a4a4a;"></div>
<div class="a" style="left:813.1999999999999px;top:206.10000000000002px;width:4.4px;height:4.4px;border-radius:50%;background:#f0f0f0"></div>
<div class="a" style="left:860px;top:207.2px;width:2px;height:2.2px;background:#aaa;opacity:0.7"></div>
<div class="a" style="left:810px;top:216.2px;width:2.2px;height:2.2px;background:#aaa;opacity:0.7"></div>
<div class="a" style="left:814px;top:216.55px;width:14px;height:1.5px;background:repeating-linear-gradient(90deg,#6a6a6a 0 3.6px,transparent 3.6px 4.2px);opacity:0.7"></div>
<div class="a" style="left:841px;top:215.60000000000002px;width:7px;height:3.4px;background:#141414;"></div>
<div class="a" style="left:843px;top:216.55px;width:3px;height:1.5px;background:#ddd;opacity:0.7"></div>
<div class="a" style="left:849px;top:215.60000000000002px;width:8px;height:3.4px;background:#262626;"></div>
<div class="a" style="left:860px;top:216.2px;width:2px;height:2.2px;background:#aaa;opacity:0.7"></div>
<div class="a" style="left:810px;top:222.5px;width:2px;height:1.6px;background:#999;opacity:0.7"></div>
<div class="a" style="left:815px;top:222.70000000000002px;width:14px;height:1.2px;background:#3a78c0;"></div>
<div class="a" style="left:829px;top:222.8px;width:27px;height:1.0px;background:#4a4a4a;"></div>
<div class="a" style="left:826.8px;top:221.10000000000002px;width:4.4px;height:4.4px;border-radius:50%;background:#f0f0f0"></div>
<div class="a" style="left:860px;top:222.2px;width:2px;height:2.2px;background:#aaa;opacity:0.7"></div>
<div class="a" style="left:806px;top:226.8px;width:58px;height:15.0px;background:#3a3a3a;"></div>
<div class="a" style="left:810px;top:231.2px;width:2.2px;height:2.2px;background:#aaa;opacity:0.7"></div>
<div class="a" style="left:814px;top:231.55px;width:14px;height:1.5px;background:repeating-linear-gradient(90deg,#6a6a6a 0 3.6px,transparent 3.6px 4.2px);opacity:0.7"></div>
<div class="a" style="left:841px;top:230.60000000000002px;width:7px;height:3.4px;background:#141414;"></div>
<div class="a" style="left:843px;top:231.55px;width:3px;height:1.5px;background:#ddd;opacity:0.7"></div>
<div class="a" style="left:849px;top:230.60000000000002px;width:8px;height:3.4px;background:#262626;"></div>
<div class="a" style="left:860px;top:231.2px;width:2px;height:2.2px;background:#aaa;opacity:0.7"></div>
<div class="a" style="left:810px;top:237.5px;width:2px;height:1.6px;background:#999;opacity:0.7"></div>
<div class="a" style="left:815px;top:237.70000000000002px;width:18.6px;height:1.2px;background:#3a78c0;"></div>
<div class="a" style="left:833.6px;top:237.8px;width:22.4px;height:1.0px;background:#4a4a4a;"></div>
<div class="a" style="left:831.4px;top:236.10000000000002px;width:4.4px;height:4.4px;border-radius:50%;background:#f0f0f0"></div>
<div class="a" style="left:860px;top:237.2px;width:2px;height:2.2px;background:#aaa;opacity:0.7"></div>
<div class="a" style="left:810px;top:246.2px;width:2.2px;height:2.2px;background:#aaa;opacity:0.7"></div>
<div class="a" style="left:814px;top:246.55px;width:14px;height:1.5px;background:repeating-linear-gradient(90deg,#6a6a6a 0 3.6px,transparent 3.6px 4.2px);opacity:0.7"></div>
<div class="a" style="left:841px;top:245.60000000000002px;width:7px;height:3.4px;background:#141414;"></div>
<div class="a" style="left:843px;top:246.55px;width:3px;height:1.5px;background:#ddd;opacity:0.7"></div>
<div class="a" style="left:849px;top:245.60000000000002px;width:8px;height:3.4px;background:#262626;"></div>
<div class="a" style="left:860px;top:246.2px;width:2px;height:2.2px;background:#aaa;opacity:0.7"></div>
<div class="a" style="left:810px;top:252.5px;width:2px;height:1.6px;background:#999;opacity:0.7"></div>
<div class="a" style="left:815px;top:252.70000000000002px;width:13px;height:1.2px;background:#3a78c0;"></div>
<div class="a" style="left:828px;top:252.8px;width:28px;height:1.0px;background:#4a4a4a;"></div>
<div class="a" style="left:825.8px;top:251.10000000000002px;width:4.4px;height:4.4px;border-radius:50%;background:#f0f0f0"></div>
<div class="a" style="left:860px;top:252.2px;width:2px;height:2.2px;background:#aaa;opacity:0.7"></div>
<div class="a" style="left:810px;top:261.2px;width:2.2px;height:2.2px;background:#aaa;opacity:0.7"></div>
<div class="a" style="left:814px;top:261.55px;width:14px;height:1.5px;background:repeating-linear-gradient(90deg,#6a6a6a 0 3.6px,transparent 3.6px 4.2px);opacity:0.7"></div>
<div class="a" style="left:849px;top:260.6px;width:8px;height:3.4px;background:#262626;"></div>
<div class="a" style="left:860px;top:261.2px;width:2px;height:2.2px;background:#aaa;opacity:0.7"></div>
<div class="a" style="left:810px;top:267.5px;width:2px;height:1.6px;background:#999;opacity:0.7"></div>
<div class="a" style="left:815px;top:267.7px;width:0.4px;height:1.2px;background:#3a78c0;"></div>
<div class="a" style="left:815.4px;top:267.8px;width:40.6px;height:1.0px;background:#4a4a4a;"></div>
<div class="a" style="left:813.1999999999999px;top:266.1px;width:4.4px;height:4.4px;border-radius:50%;background:#f0f0f0"></div>
<div class="a" style="left:860px;top:267.2px;width:2px;height:2.2px;background:#aaa;opacity:0.7"></div>
<div class="a" style="left:810px;top:274.9px;width:2.2px;height:2.2px;background:#aaa;opacity:0.7"></div>
<div class="a" style="left:814px;top:275.25px;width:8px;height:1.5px;background:repeating-linear-gradient(90deg,#6a6a6a 0 3.6px,transparent 3.6px 4.2px);opacity:0.7"></div>
<div class="a" style="left:849px;top:274.3px;width:8px;height:3.4px;background:#262626;"></div>
<div class="a" style="left:860px;top:274.9px;width:2px;height:2.2px;background:#aaa;opacity:0.7"></div>
<div class="a" style="left:810px;top:281.2px;width:34px;height:1.6px;background:repeating-linear-gradient(90deg,#cfcfcf 0 3.6px,transparent 3.6px 4.2px);opacity:0.7"></div>
<div class="a" style="left:860px;top:280.9px;width:2px;height:2.2px;background:#aaa;opacity:0.7"></div>
<div class="a" style="left:804px;top:288.5px;width:61px;height:4.5px;background:#181818;"></div>
<div class="a" style="left:851px;top:289.9px;width:11px;height:1.6px;background:repeating-linear-gradient(90deg,#ddd 0 3.6px,transparent 3.6px 4.2px);opacity:0.7"></div>
<div class="a" style="left:421px;top:299px;width:444px;height:241px;background:#232323;"></div>
<div class="a" style="left:421px;top:299px;width:130px;height:241px;background:#282828;"></div>
<div class="a t" style="left:426.5px;top:303px;font-size:5.6px;line-height:6.72px;color:#f2f2f2;font-weight:bold;-webkit-text-stroke-width:0.18px;">新建计划</div>
<div class="a t" style="left:426.5px;top:316.5px;font-size:5.2px;line-height:6.24px;color:#bdbdbd;font-weight:normal;-webkit-text-stroke-width:0.18px;">计划名称</div>
<div class="a" style="left:427px;top:328px;width:117px;height:9.3px;background:#111;"></div>
<div class="a t" style="left:429.5px;top:330px;font-size:5.2px;line-height:6.24px;color:#e8e8e8;font-weight:normal;-webkit-text-stroke-width:0.18px;">2022.2.23 首站的巡检基1次测试</div>
<div class="a t" style="left:426.5px;top:344.8px;font-size:5.2px;line-height:6.24px;color:#cfcfcf;font-weight:normal;-webkit-text-stroke-width:0.18px;">执行航线</div>
<div class="a t" style="left:524px;top:344.8px;font-size:5.2px;line-height:6.24px;color:#3d86e0;font-weight:normal;-webkit-text-stroke-width:0.18px;">选择航线</div>
<div class="a" style="left:427px;top:355px;width:117px;height:37px;background:#363636;"></div>
<div class="a t" style="left:430px;top:360px;font-size:5.4px;line-height:6.48px;color:#f0f0f0;font-weight:bold;-webkit-text-stroke-width:0.18px;">基于底图规划基地巡逻_副本</div>
<div class="a" style="left:491px;top:360.5px;width:2px;height:6px;background:#4a8ee6;transform:rotate(40deg)"></div>
<div class="a t" style="left:430px;top:370px;font-size:5.2px;line-height:6.24px;color:#bdbdbd;font-weight:normal;-webkit-text-stroke-width:0.18px;">✕ M30 &nbsp;▣ M30 Camera</div>
<div class="a t" style="left:430px;top:382.2px;font-size:5.0px;line-height:6.00px;color:#6a6a6a;font-weight:normal;-webkit-text-stroke-width:0.18px;">更新时间 2022-02-22 18:13:09</div>
<div class="a" style="left:536px;top:384.0px;width:3px;height:2px;background:#666;opacity:0.7"></div>
<div class="a t" style="left:426.5px;top:398.5px;font-size:5.2px;line-height:6.24px;color:#cfcfcf;font-weight:normal;-webkit-text-stroke-width:0.18px;">执行设备</div>
<div class="a t" style="left:524px;top:398.5px;font-size:5.2px;line-height:6.24px;color:#3d86e0;font-weight:normal;-webkit-text-stroke-width:0.18px;">选择设备</div>
<div class="a" style="left:427px;top:408.5px;width:117.7px;height:47.1px;background:#363636;"></div>
<div class="a" style="left:427px;top:408.5px;width:24px;height:14.2px;background:#474747;"></div>
<div class="a t" style="left:431px;top:412.5px;font-size:4.8px;line-height:5.76px;color:#dcdcdc;font-weight:normal;-webkit-text-stroke-width:0.18px;">▣无任务</div>
<div class="a" style="left:455px;top:415.0px;width:3px;height:1px;background:#aaa;opacity:0.7"></div>
<div class="a" style="left:427px;top:422.7px;width:117.7px;height:0.5px;background:#2e2e2e;"></div>
<div class="a t" style="left:429.5px;top:425px;font-size:5.2px;line-height:6.24px;color:#e6e6e6;font-weight:normal;-webkit-text-stroke-width:0.18px;">Dock-漠漠江5号机</div>
<div class="a" style="left:430px;top:435px;width:4.5px;height:4.8px;background:#ddd;"></div>
<div class="a" style="left:430.8px;top:435.8px;width:2.9px;height:2.8px;background:#363636;"></div>
<div class="a t" style="left:436px;top:434.8px;font-size:4.6px;line-height:5.52px;color:#2ebd6b;font-weight:normal;-webkit-text-stroke-width:0.18px;">设备空闲中</div>
<div class="a t" style="left:430px;top:444.8px;font-size:4.6px;line-height:5.52px;color:#bbb;font-weight:normal;-webkit-text-stroke-width:0.18px;">✕</div>
<div class="a t" style="left:436px;top:444.8px;font-size:4.6px;line-height:5.52px;color:#2ebd6b;font-weight:normal;-webkit-text-stroke-width:0.18px;">待机</div>
<div class="a t" style="left:426.5px;top:462px;font-size:5.2px;line-height:6.24px;color:#dcdcdc;font-weight:normal;-webkit-text-stroke-width:0.18px;">任务策略</div>
<div class="a" style="left:427px;top:472.4px;width:39px;height:11.6px;background:#2a87ea;"></div>
<div class="a t" style="left:441px;top:475.5px;font-size:5px;line-height:6.00px;color:#fff;font-weight:normal;-webkit-text-stroke-width:0.18px;">立即</div>
<div class="a" style="left:468px;top:472.4px;width:37px;height:11.6px;background:#3a3a3a;"></div>
<div class="a t" style="left:475px;top:475.5px;font-size:5px;line-height:6.00px;color:#d8d8d8;font-weight:normal;-webkit-text-stroke-width:0.18px;">单次定时</div>
<div class="a" style="left:506.7px;top:472.4px;width:38.0px;height:11.6px;background:#3a3a3a;"></div>
<div class="a t" style="left:514px;top:475.5px;font-size:5px;line-height:6.00px;color:#d8d8d8;font-weight:normal;-webkit-text-stroke-width:0.18px;">重复定时</div>
<div class="a t" style="left:426.5px;top:490px;font-size:5.2px;line-height:6.24px;color:#dcdcdc;font-weight:normal;-webkit-text-stroke-width:0.18px;">失败动作 ⓘ</div>
<div class="a" style="left:427px;top:500.8px;width:58.6px;height:11.2px;background:#2a87ea;"></div>
<div class="a t" style="left:450px;top:503.5px;font-size:5px;line-height:6.00px;color:#fff;font-weight:normal;-webkit-text-stroke-width:0.18px;">返航</div>
<div class="a" style="left:487px;top:500.8px;width:57.7px;height:11.2px;background:#3a3a3a;"></div>
<div class="a t" style="left:504px;top:503.5px;font-size:5px;line-height:6.00px;color:#d8d8d8;font-weight:normal;-webkit-text-stroke-width:0.18px;">继续执行</div>
<div class="a" style="left:421px;top:517.6px;width:130px;height:22.4px;background:#232323;"></div>
<div class="a" style="left:427px;top:523.7px;width:57.5px;height:11.8px;background:#363636;"></div>
<div class="a t" style="left:450px;top:526.5px;font-size:5px;line-height:6.00px;color:#d8d8d8;font-weight:normal;-webkit-text-stroke-width:0.18px;">取消</div>
<div class="a" style="left:487px;top:523.7px;width:57.7px;height:11.8px;background:#2a87ea;"></div>
<div class="a t" style="left:510px;top:526.5px;font-size:5px;line-height:6.00px;color:#fff;font-weight:normal;-webkit-text-stroke-width:0.18px;">确定</div>
<div class="a" style="left:548px;top:324px;width:2.5px;height:193.6px;background:#444;"></div>
<div class="a" style="left:548px;top:324px;width:2.5px;height:6px;background:#666;"></div>
<svg class="a" style="left:475px;top:460px" width="8" height="10" viewBox="0 0 8 10"><path d="M1 1 L1 8.5 L3 6.8 L4.5 9.5 L5.6 9 L4.3 6.3 L6.8 6.3Z" fill="#fff" stroke="#222" stroke-width="0.6"/></svg>
<div class="a" style="left:551px;top:299px;width:129px;height:241px;background:#242424;"></div>
<div class="a" style="left:551px;top:299px;width:1px;height:241px;background:#1c1c1c;"></div>
<div class="a t" style="left:556px;top:303.5px;font-size:5.6px;line-height:6.72px;color:#eee;font-weight:normal;-webkit-text-stroke-width:0.18px;">〈 设备</div>
<div class="a" style="left:551px;top:317px;width:129px;height:0.6px;background:#1d1d1d;"></div>
<div class="a" style="left:555.7px;top:320.6px;width:119.6px;height:51.2px;background:#3a3a3a;border:1px solid #3f6fb0"></div>
<div class="a" style="left:556.7px;top:321.6px;width:23.3px;height:14.4px;background:#4c4c4c;"></div>
<div class="a t" style="left:559.5px;top:326.5px;font-size:4.6px;line-height:5.52px;color:#dcdcdc;font-weight:normal;-webkit-text-stroke-width:0.18px;">▣无任务</div>
<div class="a" style="left:584px;top:328.5px;width:3px;height:1px;background:#aaa;opacity:0.7"></div>
<div class="a t" style="left:559px;top:340px;font-size:5.2px;line-height:6.24px;color:#e6e6e6;font-weight:normal;-webkit-text-stroke-width:0.18px;">Dock-漠漠江5号机</div>
<div class="a" style="left:560px;top:349.5px;width:4.5px;height:4.8px;background:#ddd;"></div>
<div class="a" style="left:560.8px;top:350.3px;width:2.9px;height:2.8px;background:#3a3a3a;"></div>
<div class="a t" style="left:566px;top:349.5px;font-size:4.6px;line-height:5.52px;color:#2ebd6b;font-weight:normal;-webkit-text-stroke-width:0.18px;">设备空闲中</div>
<div class="a t" style="left:560px;top:359.5px;font-size:4.6px;line-height:5.52px;color:#bbb;font-weight:normal;-webkit-text-stroke-width:0.18px;">✕</div>
<div class="a t" style="left:566px;top:359.5px;font-size:4.6px;line-height:5.52px;color:#2ebd6b;font-weight:normal;-webkit-text-stroke-width:0.18px;">待机</div>
<svg class="a" style="left:680px;top:299px" width="91" height="241" viewBox="680 299 91 241">
<defs><filter id="b2"><feGaussianBlur stdDeviation="2.5"/></filter><filter id="b3"><feGaussianBlur stdDeviation="0.8"/></filter></defs>
<rect x="680" y="299" width="91" height="241" fill="#33403a"/>
<g filter="url(#b2)">
<rect x="680" y="299" width="91" height="45" fill="#26322c"/>
<path d="M680 330 L771 320 L771 350 L680 365Z" fill="#3a4a40"/>
<path d="M680 465 L771 450 L771 540 L680 540Z" fill="#3c4640"/>
<path d="M690 480 L760 470 L765 490 L700 500Z" fill="#4a5048"/>
<path d="M680 505 L771 495 L771 530 L680 535Z" fill="#2e3832"/>
<path d="M740 340 L771 335 L771 440 L760 445Z" fill="#5a625c"/>
</g>
<g stroke="#6a7a6a" stroke-width="0.8" opacity="0.6"><line x1="680" y1="345" x2="771" y2="322"/><line x1="680" y1="350" x2="771" y2="328"/></g>
<filter id="tx4" x="0" y="0" width="100%" height="100%"><feTurbulence type="fractalNoise" baseFrequency="0.25 0.18" numOctaves="2" seed="5"/><feColorMatrix values="0 0 0 0 0.85  0 0 0 0 0.9  0 0 0 0 0.85  0 0 0 2.6 -1.35"/></filter>
<rect x="680" y="299" width="91" height="241" filter="url(#tx4)" opacity="0.22"/>
<path d="M680.5 371 L745 352 L770 447 L760 452 L680.5 465Z" fill="#a29a90"/>
<path d="M681.7 369 L736 353 L768 446 L757 454 L681.7 462Z" fill="#000" opacity="0.01"/>
<g filter="url(#b3)">
<path d="M730 356 L745 352 L770 447 L758 452Z" fill="#bfc0bd"/><path d="M737 362 L742 361 L762 440 L757 441Z" fill="#55606a" opacity="0.6"/>
<rect x="681" y="395" width="7" height="26" fill="#8a6a5a" opacity="0.7"/>
<rect x="690" y="440" width="30" height="12" fill="#8c8680"/>
</g>
<rect x="693" y="382" width="40" height="58" rx="19" transform="rotate(-6 713 411)" fill="#7e4034"/>
<rect x="697.5" y="386" width="31" height="50" rx="15" transform="rotate(-6 713 411)" fill="#e2e2e2"/>
<g stroke="#2fe08c" stroke-width="1.8" fill="none" opacity="0.95"><polyline points="680,374 697,368 714,361 734,354 741,372 746,390 751,409 755,425 759,450 734,456 708,463 682,470"/></g>
<g fill="#f6f6f6" stroke="#2fe08c" stroke-width="1.4">
<circle cx="682" cy="372" r="4.6"/><circle cx="697" cy="368" r="4.6"/><circle cx="714" cy="361" r="4.6"/><circle cx="735" cy="354" r="4.6"/>
<circle cx="741" cy="372" r="4.6"/><circle cx="746" cy="390" r="4.6"/><circle cx="751" cy="409" r="4.6"/><circle cx="755" cy="425" r="4.6"/><circle cx="759" cy="450" r="4.6"/>
<circle cx="733" cy="456" r="4.6"/><circle cx="708" cy="463" r="4.6"/><circle cx="682" cy="470" r="4.6"/>
</g>
<rect x="680" y="529" width="91" height="11" fill="#1c2220" opacity="0.8"/>
</svg>
<div class="a t" style="left:686px;top:303.8px;font-size:7.2px;line-height:8.64px;color:#fff;font-weight:bold;-webkit-text-stroke-width:0.18px;">基于底图规划基地巡逻</div>
<div class="a t" style="left:686px;top:314.5px;font-size:4.6px;line-height:5.52px;color:#ddd;font-weight:normal;-webkit-text-stroke-width:0.18px;">▲ 漠漠东</div>
<div class="a t" style="left:693px;top:412px;font-size:4.6px;line-height:5.52px;color:#eee;font-weight:normal;-webkit-text-stroke-width:0.18px;">现场数</div>
<div class="a t" style="left:723.5px;top:501.5px;font-size:6.5px;line-height:7.80px;color:#eee;font-weight:normal;-webkit-text-stroke-width:0.18px;">航线长度</div>
<div class="a t" style="left:723px;top:510.5px;font-size:8.2px;line-height:9.84px;color:#f2f2f2;font-weight:normal;-webkit-text-stroke-width:0.18px;">1267.5<span style="font-size:5.5px"> m</span></div>
<div class="a t" style="left:765px;top:501.5px;font-size:6.5px;line-height:7.80px;color:#eee;font-weight:normal;-webkit-text-stroke-width:0.18px;">航</div>
<div class="a t" style="left:765px;top:510.5px;font-size:8.2px;line-height:9.84px;color:#f2f2f2;font-weight:normal;-webkit-text-stroke-width:0.18px;">5</div>
<div class="a t" style="left:689px;top:532.5px;font-size:4.8px;line-height:5.76px;color:#ddd;font-weight:normal;-webkit-text-stroke-width:0.18px;">45.638960653° N</div>
<div class="a t" style="left:736.8px;top:532.5px;font-size:4.8px;line-height:5.76px;color:#ddd;font-weight:normal;-webkit-text-stroke-width:0.18px;">126.653017144° E</div>
<div class="a" style="left:771px;top:299px;width:94px;height:241px;background:#1c1c1c;"></div>
<div class="a" style="left:771px;top:299.5px;width:93px;height:16.5px;background:#262626;"></div>
<div class="a" style="left:771px;top:299.5px;width:17.5px;height:16.5px;background:#3d3d3d;"></div>
<div class="a t" style="left:773px;top:305.5px;font-size:4.4px;line-height:5.28px;color:#ddd;font-weight:normal;-webkit-text-stroke-width:0.18px;">无任务</div>
<div class="a" style="left:793px;top:307.5px;width:2px;height:1px;background:#aaa;opacity:0.7"></div>
<div class="a t" style="left:830px;top:305.5px;font-size:4.4px;line-height:5.28px;color:#ddd;font-weight:normal;-webkit-text-stroke-width:0.18px;">漠漠江5号机</div>
<div class="a" style="left:771px;top:316px;width:17.4px;height:29px;background:#333;"></div>
<div class="a" style="left:774.5px;top:319px;width:11.5px;height:12px;background:#e6e6e6;border-radius:1px"></div>
<div class="a" style="left:776px;top:322.5px;width:8.5px;height:0.8px;background:#555;"></div>
<div class="a" style="left:776px;top:325px;width:8.5px;height:0.8px;background:#666;"></div>
<div class="a" style="left:775.5px;top:328px;width:9.5px;height:1px;background:#444;"></div>
<div class="a t" style="left:773.5px;top:333.5px;font-size:4.6px;line-height:5.52px;color:#ddd;font-weight:normal;-webkit-text-stroke-width:0.18px;">Dock</div>
<div class="a" style="left:788.4px;top:316px;width:75.6px;height:29px;background:#1e1e1e;"></div>
<div class="a t" style="left:793px;top:319.5px;font-size:4.4px;line-height:5.28px;color:#2ebd6b;font-weight:normal;-webkit-text-stroke-width:0.18px;">设备空闲中</div>
<div class="a t" style="left:793px;top:326.5px;font-size:4.5px;line-height:5.40px;color:#ddd;font-weight:normal;-webkit-text-stroke-width:0.18px;">✈ 0m/s</div>
<div class="a t" style="left:827px;top:326.5px;font-size:4.5px;line-height:5.40px;color:#ddd;font-weight:normal;-webkit-text-stroke-width:0.18px;">⚘ -10.4°C</div>
<div class="a t" style="left:793px;top:335px;font-size:4.5px;line-height:5.40px;color:#ddd;font-weight:normal;-webkit-text-stroke-width:0.18px;">▢ 1.2M/s</div>
<div class="a t" style="left:827px;top:335px;font-size:4.5px;line-height:5.40px;color:#ddd;font-weight:normal;-webkit-text-stroke-width:0.18px;">▣ 0</div>
<div class="a" style="left:857px;top:325.5px;width:7px;height:5.5px;background:#1a1a1a;"></div>
<div class="a" style="left:858px;top:326px;width:4px;height:4px;background:#d88a3a;border-radius:50%"></div>
<div class="a" style="left:857px;top:333.5px;width:7px;height:6.5px;background:#2a87ea;"></div>
<svg class="a" style="left:771px;top:345px" width="93" height="75" viewBox="771 345 93 75">
<defs><filter id="b4" x="-50%" y="-50%" width="200%" height="200%"><feGaussianBlur stdDeviation="6"/></filter><filter id="b5"><feGaussianBlur stdDeviation="1.4"/></filter></defs>
<rect x="771" y="345" width="93" height="75" fill="#2a1820"/>
<g filter="url(#b4)">
<ellipse cx="800" cy="354" rx="20" ry="11" fill="#363064"/>
<ellipse cx="815" cy="382" rx="30" ry="10" fill="#1e161c"/>
<ellipse cx="868" cy="388" rx="20" ry="34" fill="#e8285a"/>
<ellipse cx="820" cy="418" rx="60" ry="10" fill="#a8183c"/>
<ellipse cx="850" cy="414" rx="30" ry="9" fill="#e0205a"/>
<ellipse cx="832" cy="358" rx="18" ry="10" fill="#3e2a36"/>
<ellipse cx="772" cy="385" rx="5" ry="34" fill="#6a1a28"/>
</g>
<rect x="790" y="399" width="74" height="2" fill="#6a3444" opacity="0.5" filter="url(#b5)"/>
<g filter="url(#b5)">
<circle cx="811" cy="366.5" r="3.8" fill="#fff0e0"/><circle cx="782" cy="372.6" r="2.3" fill="#a8d0ff"/><circle cx="806.4" cy="373.3" r="2.1" fill="#a0c8ff"/>
<circle cx="777" cy="373" r="1.4" fill="#d0e0ff"/><circle cx="792" cy="372.6" r="1.4" fill="#e0c080"/><circle cx="847" cy="365" r="1.6" fill="#e8d0ff"/>
<circle cx="865" cy="408" r="4.5" fill="#fff"/><circle cx="773" cy="382" r="1.2" fill="#e0c080"/>
</g>
<path d="M836 381 L846 382 M840 381 L842 388" stroke="#3ae07a" stroke-width="1.6" fill="none" filter="url(#b3)"/>
</svg>
<div class="a" style="left:771px;top:420px;width:93px;height:38px;background:#1e1e1e;"></div>
<div class="a" style="left:771px;top:420px;width:18px;height:38px;background:#333;"></div>
<div class="a" style="left:776px;top:435.5px;width:5px;height:1px;background:#aaa;opacity:0.7"></div>
<div class="a t" style="left:773px;top:441px;font-size:4.4px;line-height:5.28px;color:#ddd;font-weight:normal;-webkit-text-stroke-width:0.18px;">M30</div>
<div class="a t" style="left:793px;top:423px;font-size:4.4px;line-height:5.28px;color:#2ebd6b;font-weight:normal;-webkit-text-stroke-width:0.18px;">待机</div>
<div class="a t" style="left:792px;top:432px;font-size:4.4px;line-height:5.28px;color:#ddd;font-weight:normal;-webkit-text-stroke-width:0.18px;">HD off</div>
<div class="a t" style="left:827px;top:432px;font-size:4.4px;line-height:5.28px;color:#ddd;font-weight:normal;-webkit-text-stroke-width:0.18px;">RTK ✕ 25</div>
<div class="a" style="left:858px;top:431.5px;width:2px;height:4.5px;background:#ccc;"></div>
<div class="a t" style="left:792px;top:440.5px;font-size:4.4px;line-height:5.28px;color:#ddd;font-weight:normal;-webkit-text-stroke-width:0.18px;">ASL 177.7 m</div>
<div class="a t" style="left:827px;top:440.5px;font-size:4.4px;line-height:5.28px;color:#ddd;font-weight:normal;-webkit-text-stroke-width:0.18px;">AGL 9.7 m</div>
<div class="a t" style="left:856px;top:440.5px;font-size:4.4px;line-height:5.28px;color:#ddd;font-weight:normal;-webkit-text-stroke-width:0.18px;">H.S</div>
<div class="a" style="left:793px;top:449.8px;width:45px;height:6.9px;background:#3c3c3c;"></div>
<div class="a t" style="left:807px;top:450.8px;font-size:4.4px;line-height:5.28px;color:#ddd;font-weight:normal;-webkit-text-stroke-width:0.18px;">▣ FPV</div>
<div class="a" style="left:839px;top:449.8px;width:25px;height:6.9px;background:#2a8ee8;"></div>
<div class="a t" style="left:848px;top:450.8px;font-size:4.4px;line-height:5.28px;color:#fff;font-weight:normal;-webkit-text-stroke-width:0.18px;">▣</div>
<svg class="a" style="left:771px;top:458px" width="93" height="73" viewBox="771 458 93 73">
<defs><filter id="b6" x="-50%" y="-50%" width="200%" height="200%"><feGaussianBlur stdDeviation="5"/></filter></defs>
<rect x="771" y="458" width="93" height="73" fill="#1a1216"/>
<g filter="url(#b6)">
<ellipse cx="832" cy="508" rx="28" ry="12" fill="#2e2220"/>
<rect x="800" y="465" width="60" height="28" fill="#22181a"/>
</g>
<rect x="771" y="458" width="17" height="73" fill="#0a0808"/>
<g fill="none" stroke="#3a2c2c" stroke-width="1">
<rect x="799" y="460" width="17" height="28"/><rect x="822" y="460" width="17" height="28"/><rect x="845" y="460" width="19" height="28"/>
<line x1="807.5" y1="460" x2="807.5" y2="488"/><line x1="830.5" y1="460" x2="830.5" y2="488"/><line x1="854" y1="460" x2="854" y2="488"/>
<line x1="799" y1="470" x2="864" y2="470"/>
</g>
<rect x="790" y="488" width="74" height="3" fill="#2a1e1e" opacity="0.7"/>
<ellipse cx="806" cy="485" rx="3" ry="0.9" fill="#a07040" opacity="0.8"/>
<ellipse cx="836" cy="497" rx="4" ry="1.1" fill="#8a6a40" opacity="0.6"/>
</svg>
<div class="a" style="left:771px;top:531px;width:94px;height:9px;background:#161616;"></div>
<div class="a t" style="left:784px;top:532.5px;font-size:4.5px;line-height:5.40px;color:#d0d0d0;font-weight:normal;-webkit-text-stroke-width:0.18px;">44° E &nbsp; ASL: 171.8 m &nbsp; HAE... &nbsp;◯ 100%</div>
</div>
<svg class="a" style="left:884px;top:517px" width="38" height="26" viewBox="884 517 38 26">
<g fill="#111" stroke="#111" stroke-width="0.35" stroke-linejoin="round">
<path d="M888 523.1 L899.3 523.1 L898.5 526.3 L891.5 526.3 L890.2 531.6 L900.6 531.6 L903.5 519.1 L907.8 519.1 L904.1 534.9 L885.9 534.9 Z"/>
<path d="M908.1 523.6 L912.6 523.6 L909.9 536.3 Q909.1 540.5 905 540.5 L897.1 540.5 L897.9 537.3 L903.6 537.3 Q905.1 537.3 905.5 535.5 Z"/>
<path d="M916.4 523.6 L920.6 523.6 L917.4 534.9 L912.6 534.9 Z"/>
</g></svg>
<div id="dock" class="a t">DOCK</div>
</body></html>
